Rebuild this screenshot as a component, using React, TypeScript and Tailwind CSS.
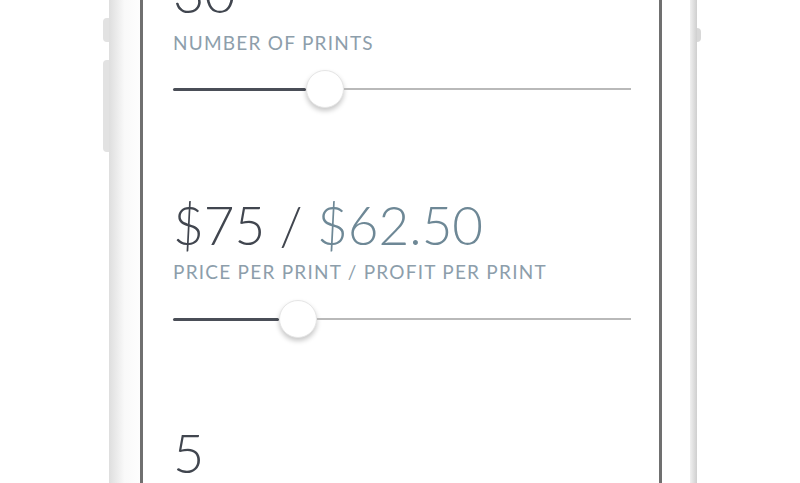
function Slider({ pos }: { pos: number }) {
  return (
    <div className="flex h-10 items-center">
      <div className="h-[3px] rounded-full bg-[#4a4e57]" style={{ width: pos - 19 }} />
      <div className="h-[38px] w-[38px] shrink-0 rounded-full border border-[#e6e6e6] bg-white shadow-[0_3px_5px_rgba(0,0,0,0.22)]" />
      <div className="h-[2px] flex-1 bg-[#b9b9b9]" />
    </div>
  );
}

export default function App() {
  return (
    <div className="flex h-[483px] w-[800px] overflow-hidden bg-white font-['Lato',sans-serif]">
      <div className="w-[103px] shrink-0" />
      {/* side buttons */}
      <div className="flex w-[6px] shrink-0 flex-col">
        <div className="mt-[18px] h-[24px] rounded-l-sm bg-[#e2e2e2]" />
        <div className="mt-[18px] h-[92px] rounded-l-sm bg-[#e2e2e2]" />
      </div>
      <div className="w-[31px] shrink-0 bg-gradient-to-r from-[#dedede] via-[#f9f9f9] to-[#fdfdfd]" />
      {/* screen */}
      <div className="w-[522px] shrink-0 border-x-[3px] border-[#707070] pl-[30px] pr-[28px]">
        <div className="-mt-[34px]">
          <div className="h-[54px] text-[54px] font-light leading-[54px] text-[#41464f]">30</div>
          <div className="mt-[13px] text-[19px] leading-[20px] tracking-[0.065em] text-[#8d9eab]">NUMBER OF PRINTS</div>
          <div className="mt-[16px]">
            <Slider pos={152} />
          </div>
        </div>
        <div className="mt-[89px]">
          <div className="h-[54px] text-[53px] font-light leading-[54px] text-[#41464f]">
            $75 / <span className="text-[#6e8896]">$62.50</span>
          </div>
          <div className="mt-[10px] text-[19px] leading-[20px] tracking-[0.065em] text-[#8d9eab]">
            PRICE PER PRINT / PROFIT PER PRINT
          </div>
          <div className="mt-[17px]">
            <Slider pos={125} />
          </div>
        </div>
        <div className="mt-[87px] h-[54px] text-[54px] font-light leading-[54px] text-[#41464f]">5</div>
      </div>
      <div className="w-[28px] shrink-0 bg-white" />
      <div className="w-[7px] shrink-0 bg-gradient-to-r from-[#f0f0f0] to-[#cfcfcf]" />
      <div className="flex w-[4px] shrink-0 flex-col">
        <div className="mt-[28px] h-[14px] rounded-r-sm bg-[#d8d8d8]" />
      </div>
    </div>
  );
}
